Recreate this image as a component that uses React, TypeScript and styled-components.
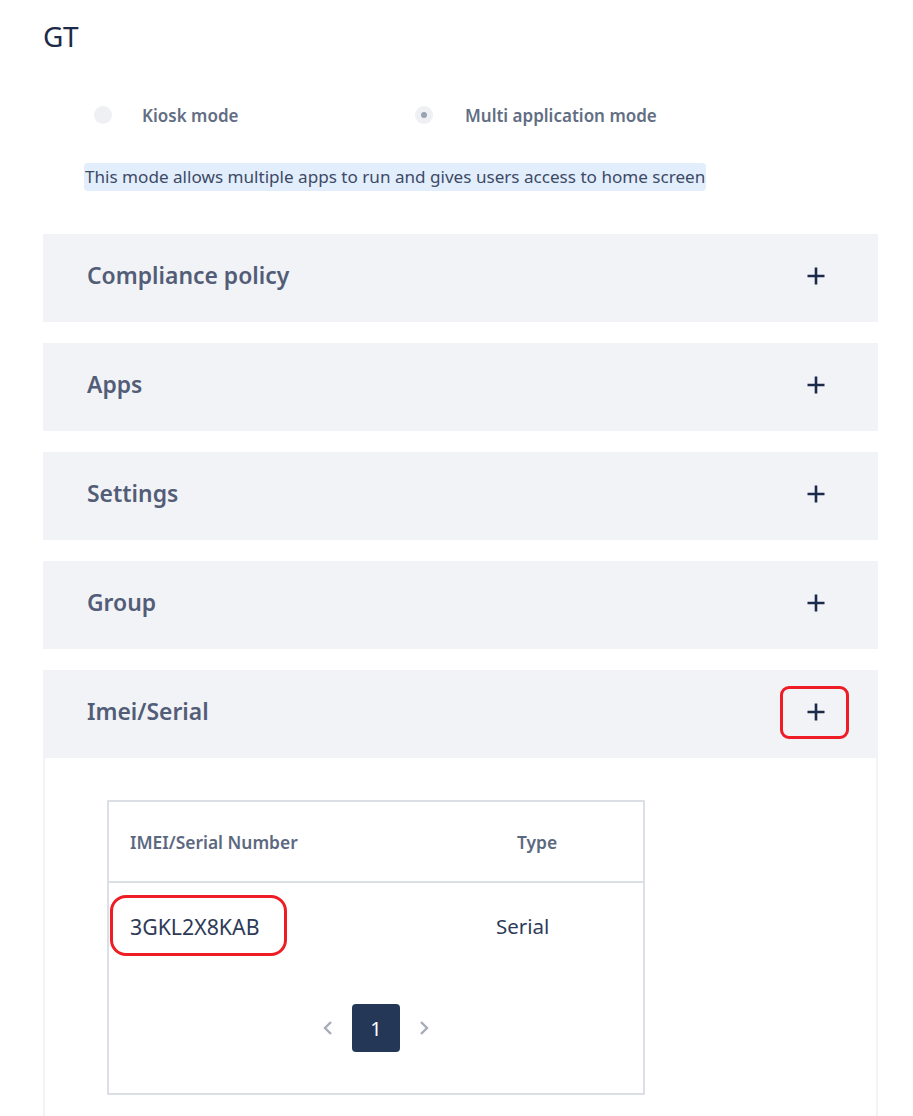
import React from "react";
import styled, { createGlobalStyle } from "styled-components";

const GlobalStyle = createGlobalStyle`
  html, body { margin: 0; padding: 0; background: #ffffff; }
  body { font-family: "Noto Sans", "Open Sans", Arial, sans-serif; }
  *, *::before, *::after { box-sizing: border-box; }
`;

const Page = styled.div`
  width: 913px;
  height: 1116px;
  overflow: hidden;
  padding: 18px 35px 0 43px;
`;

const Title = styled.h1`
  margin: 0;
  font-size: 28px;
  font-weight: 400;
  line-height: 36px;
  color: #1d2b48;
  letter-spacing: -0.3px;
`;

const ModeRow = styled.div`
  display: flex;
  margin: 43px 0 0 51px;
  height: 36px;
  align-items: center;
`;

const ModeOption = styled.label<{ $width?: number; $gap: number }>`
  display: flex;
  align-items: center;
  gap: ${(p) => p.$gap}px;
  width: ${(p) => (p.$width ? `${p.$width}px` : "auto")};
  font-size: 17px;
  font-weight: 600;
  color: #626e83;
`;

const RadioDot = styled.span<{ $checked?: boolean }>`
  width: 18px;
  height: 18px;
  border-radius: 50%;
  background: #eef0f4;
  display: flex;
  align-items: center;
  justify-content: center;
  &::after {
    content: "";
    width: 6px;
    height: 6px;
    border-radius: 50%;
    background: #9aa3b3;
    display: ${(p) => (p.$checked ? "block" : "none")};
  }
`;

const InfoBox = styled.div`
  display: inline-block;
  margin: 30px 0 0 41px;
  padding: 0 1px;
  height: 28px;
  line-height: 28px;
  background: #e3eefc;
  border-radius: 4px;
  font-size: 17.1px;
  color: #3c4a66;
`;

const AccordionList = styled.div`
  display: flex;
  flex-direction: column;
  gap: 21px;
  margin-top: 43px;
`;

const Section = styled.section``;

const SectionHeader = styled.div`
  height: 88px;
  background: #f2f3f7;
  display: flex;
  align-items: center;
  justify-content: space-between;
  padding: 0 52px 5px 44px;
`;

const SectionTitle = styled.span`
  font-size: 22.9px;
  font-weight: 600;
  color: #525d77;
`;

const PlusWrap = styled.span<{ $marked?: boolean }>`
  position: relative;
  width: 20px;
  height: 20px;
  display: flex;
  align-items: center;
  justify-content: center;
  &::after {
    content: "";
    display: ${(p) => (p.$marked ? "block" : "none")};
    position: absolute;
    left: -26px;
    top: -16px;
    width: 69px;
    height: 53px;
    border: 3px solid #ee1c25;
    border-radius: 9px;
  }
`;

const SectionBody = styled.div`
  border: 2px solid #f2f3f7;
  border-top: none;
  padding: 42px 0 40px 62px;
  height: 400px;
`;

const Table = styled.div`
  width: 538px;
  border: 2px solid #dcdfe5;
`;

const HeadRow = styled.div`
  display: grid;
  grid-template-columns: 366px 1fr;
  height: 81px;
  align-items: center;
  border-bottom: 2px solid #dcdfe5;
`;

const HeadCell = styled.div<{ $pad: number }>`
  padding-left: ${(p) => p.$pad}px;
  font-size: 17.4px;
  font-weight: 600;
  color: #5c6880;
`;

const BodyRow = styled.div`
  display: grid;
  grid-template-columns: 366px 1fr;
  height: 86px;
`;

const BodyCell = styled.div<{ $pad: number; $size: number; $marked?: boolean }>`
  position: relative;
  display: flex;
  align-items: center;
  padding-left: ${(p) => p.$pad}px;
  font-size: ${(p) => p.$size}px;
  font-weight: 400;
  color: #2e3b57;
  &::after {
    content: "";
    display: ${(p) => (p.$marked ? "block" : "none")};
    position: absolute;
    left: 1px;
    top: 12px;
    width: 177px;
    height: 61px;
    border: 3px solid #ee1c25;
    border-radius: 16px;
  }
`;

const Pager = styled.div`
  display: flex;
  align-items: center;
  justify-content: center;
  gap: 16px;
  padding: 35px 0 41px;
`;

const Chevron = styled.span`
  width: 16px;
  height: 16px;
  display: flex;
  align-items: center;
  justify-content: center;
`;

const PageButton = styled.span`
  width: 48px;
  height: 48px;
  border-radius: 4px;
  background: #253756;
  color: #ffffff;
  font-size: 20px;
  display: flex;
  align-items: center;
  justify-content: center;
`;

const Plus = () => (
  <svg width="20" height="20" viewBox="0 0 20 20">
    <path d="M10 1.5v17M1.5 10h17" stroke="#1b2a4a" strokeWidth="2.6" />
  </svg>
);

const ChevronIcon = ({ dir }: { dir: "left" | "right" }) => (
  <svg width="12" height="16" viewBox="0 0 12 16">
    <path
      d={dir === "left" ? "M9 2L3 8l6 6" : "M3 2l6 6-6 6"}
      fill="none"
      stroke="#a5adbb"
      strokeWidth="2.4"
    />
  </svg>
);

const sections = ["Compliance policy", "Apps", "Settings", "Group"];

export default function App() {
  return (
    <Page>
      <GlobalStyle />
      <Title>GT</Title>
      <ModeRow>
        <ModeOption $width={321} $gap={30}>
          <RadioDot />
          Kiosk mode
        </ModeOption>
        <ModeOption $gap={32}>
          <RadioDot $checked />
          Multi application mode
        </ModeOption>
      </ModeRow>
      <InfoBox>This mode allows multiple apps to run and gives users access to home screen</InfoBox>
      <AccordionList>
        {sections.map((s) => (
          <Section key={s}>
            <SectionHeader>
              <SectionTitle>{s}</SectionTitle>
              <PlusWrap>
                <Plus />
              </PlusWrap>
            </SectionHeader>
          </Section>
        ))}
        <Section>
          <SectionHeader>
            <SectionTitle>Imei/Serial</SectionTitle>
            <PlusWrap $marked>
              <Plus />
            </PlusWrap>
          </SectionHeader>
          <SectionBody>
            <Table>
              <HeadRow>
                <HeadCell $pad={21}>IMEI/Serial Number</HeadCell>
                <HeadCell $pad={42}>Type</HeadCell>
              </HeadRow>
              <BodyRow>
                <BodyCell $pad={21} $size={21.3} $marked>
                  3GKL2X8KAB
                </BodyCell>
                <BodyCell $pad={21} $size={20.5}>
                  Serial
                </BodyCell>
              </BodyRow>
              <Pager>
                <Chevron>
                  <ChevronIcon dir="left" />
                </Chevron>
                <PageButton>1</PageButton>
                <Chevron>
                  <ChevronIcon dir="right" />
                </Chevron>
              </Pager>
            </Table>
          </SectionBody>
        </Section>
      </AccordionList>
    </Page>
  );
}
